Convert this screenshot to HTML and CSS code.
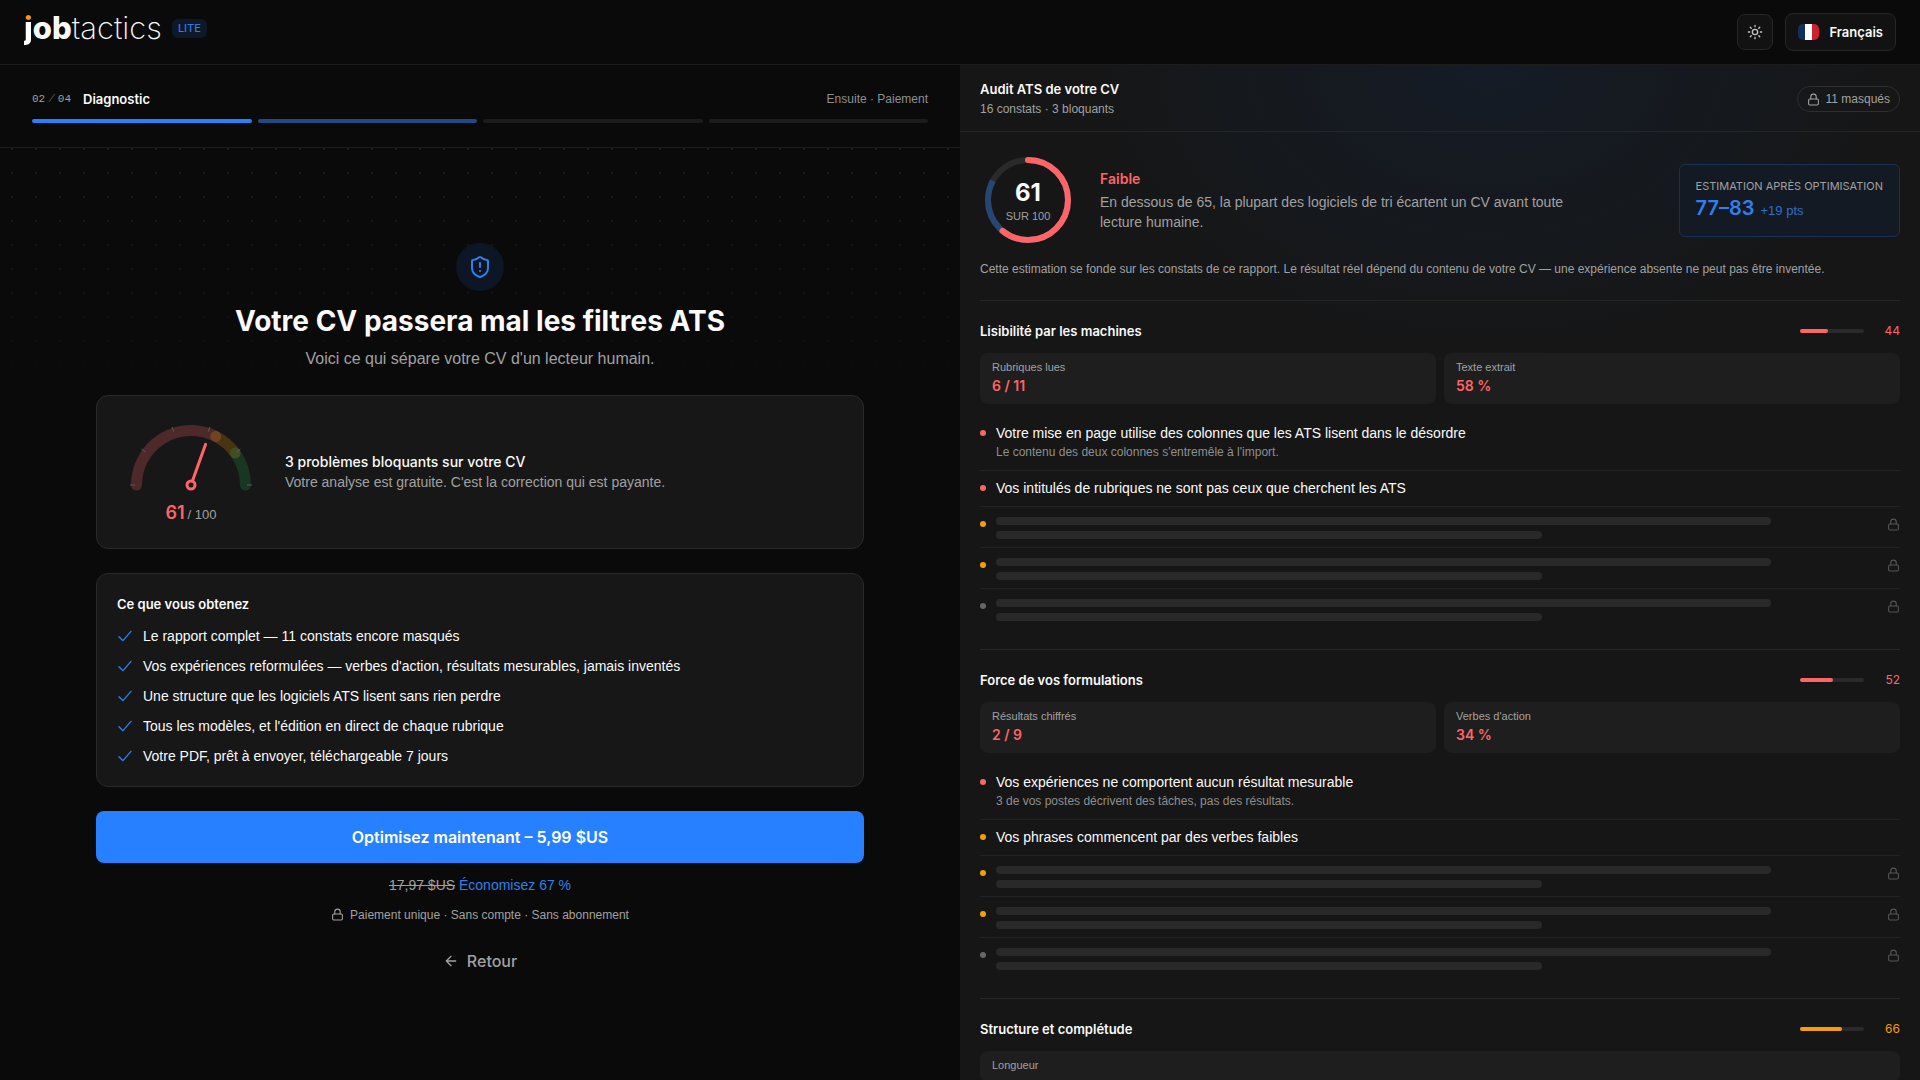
FILE: index.html
```html
<!DOCTYPE html>
<html lang="fr">

<head>
    <meta charset="UTF-8">
    <meta name="viewport" content="width=device-width, initial-scale=1.0">
    <title>JobTactics Lite - Diagnostic</title>
    <link rel="stylesheet" href="styles.css">
</head>

<body>
    <!-- Shared icons -->
    <svg class="sprite" aria-hidden="true">
        <symbol id="lock" viewBox="0 0 24 24">
            <rect x="3" y="11" width="18" height="11" rx="2" />
            <path d="M7 11V7a5 5 0 0 1 10 0v4" />
        </symbol>
        <symbol id="check" viewBox="0 0 24 24">
            <path d="M21 5 9 19l-6-6" />
        </symbol>
    </svg>

    <header class="topbar">
        <a class="brand" href="#">
            <span class="logo"><b><span class="logo-j">j</span>ob</b>tactics</span>
            <span class="badge">LITE</span>
        </a>
        <div class="topbar-actions">
            <button class="theme-btn" type="button" aria-label="Thème">
                <svg class="icon icon-16" viewBox="0 0 24 24">
                    <circle cx="12" cy="12" r="4" />
                    <path d="M12 2v2M12 20v2M4.9 4.9l1.4 1.4M17.7 17.7l1.4 1.4M2 12h2M20 12h2M6.3 17.7l-1.4 1.4M19.1 4.9l-1.4 1.4" />
                </svg>
            </button>
            <button class="lang-btn" type="button">
                <span class="flag"></span>
                Français
            </button>
        </div>
    </header>

    <main class="layout">
        <section class="pane-left">
            <div class="steps">
                <div class="steps-head">
                    <span class="steps-count">02<i>/</i>04</span>
                    <span class="steps-name">Diagnostic</span>
                    <span class="steps-next">Ensuite · Paiement</span>
                </div>
                <div class="steps-bars">
                    <span class="step done"></span>
                    <span class="step current"></span>
                    <span class="step"></span>
                    <span class="step"></span>
                </div>
            </div>

            <div class="offer">
                <div class="offer-inner">
                    <div class="shield">
                        <svg class="icon icon-24" viewBox="0 0 24 24">
                            <path d="M20 13c0 5-3.5 7.500-7.660 8.950a1 1 0 0 1-.67-.01C7.500 20.500 4 18 4 13V6a1 1 0 0 1 1-1c2 0 4.500-1.200 6.240-2.720a1.170 1.170 0 0 1 1.520 0C14.510 3.810 17 5 19 5a1 1 0 0 1 1 1z" />
                            <path d="M12 8v4M12 16h.01" />
                        </svg>
                    </div>
                    <h1>Votre CV passera mal les filtres ATS</h1>
                    <p class="subtitle">Voici ce qui sépare votre CV d'un lecteur humain.</p>

                    <div class="card gauge-card">
                        <div class="gauge">
                            <svg viewBox="0 0 140 80" width="140" height="80">
                                <g class="gauge-arc">
                                    <path class="arc-low" d="M15.500 65A54.500 54.500 0 0 1 94.700 16.400" />
                                    <path class="arc-mid" d="M94.700 16.400A54.500 54.500 0 0 1 114.100 33" />
                                    <path class="arc-high" d="M114.100 33A54.500 54.500 0 0 1 124.500 65" />
                                </g>
                                <path class="gauge-ticks" d="M9 65h5M20.600 29.100l4 3M51.100 7l1.600 4.700M88.900 7l-1.600 4.700M119.400 29.100l-4 3M131 65h-5" />
                                <path class="needle" d="M71.700 60.300 84.600 24.300" />
                                <circle class="hub" cx="70" cy="65" r="4" />
                            </svg>
                            <div class="gauge-value"><strong>61</strong> / 100</div>
                        </div>
                        <div>
                            <p class="card-lead">3 problèmes bloquants sur votre CV</p>
                            <p class="card-text">Votre analyse est gratuite. C'est la correction qui est payante.</p>
                        </div>
                    </div>

                    <div class="card list-card">
                        <h2>Ce que vous obtenez</h2>
                        <ul class="benefits">
                            <li><svg class="icon icon-16"><use href="#check" /></svg>Le rapport complet — 11 constats encore masqués</li>
                            <li><svg class="icon icon-16"><use href="#check" /></svg>Vos expériences reformulées — verbes d'action, résultats mesurables, jamais inventés</li>
                            <li><svg class="icon icon-16"><use href="#check" /></svg>Une structure que les logiciels ATS lisent sans rien perdre</li>
                            <li><svg class="icon icon-16"><use href="#check" /></svg>Tous les modèles, et l'édition en direct de chaque rubrique</li>
                            <li><svg class="icon icon-16"><use href="#check" /></svg>Votre PDF, prêt à envoyer, téléchargeable 7 jours</li>
                        </ul>
                    </div>

                    <button class="cta" type="button">Optimisez maintenant – 5,99 $US</button>
                    <p class="price"><s>17,97 $US</s> <span>Économisez 67 %</span></p>
                    <p class="secure"><svg class="icon icon-13"><use href="#lock" /></svg>Paiement unique · Sans compte · Sans abonnement</p>
                    <button class="back" type="button">
                        <svg class="icon icon-16" viewBox="0 0 24 24"><path d="m12 19-7-7 7-7M19 12H5" /></svg>
                        Retour
                    </button>
                </div>
            </div>
        </section>

        <section class="pane-right">
            <div class="audit-head">
                <div>
                    <h2>Audit ATS de votre CV</h2>
                    <p>16 constats · 3 bloquants</p>
                </div>
                <span class="pill"><svg class="icon icon-13"><use href="#lock" /></svg>11 masqués</span>
            </div>

            <div class="audit-body">
                <div class="summary">
                    <div class="ring">
                        <svg viewBox="0 0 96 96" width="96" height="96">
                            <circle class="ring-track" cx="48" cy="48" r="40" />
                            <circle class="ring-target" cx="48" cy="48" r="40" pathLength="100" />
                            <circle class="ring-score" cx="48" cy="48" r="40" pathLength="100" />
                        </svg>
                        <div class="ring-label"><strong>61</strong><span>SUR 100</span></div>
                    </div>
                    <div class="verdict">
                        <h3>Faible</h3>
                        <p>En dessous de 65, la plupart des logiciels de tri écartent un CV avant toute lecture humaine.</p>
                    </div>
                    <div class="estimate">
                        <p class="estimate-label">ESTIMATION APRÈS OPTIMISATION</p>
                        <p class="estimate-value"><strong>77–83</strong> +19 pts</p>
                    </div>
                </div>
                <p class="note">Cette estimation se fonde sur les constats de ce rapport. Le résultat réel dépend du contenu de votre CV — une expérience absente ne peut pas être inventée.</p>

                <section class="category low">
                    <div class="category-head">
                        <h3>Lisibilité par les machines</h3>
                        <span class="meter"><span style="width: 44%"></span></span>
                        <span class="score">44</span>
                    </div>
                    <div class="stats">
                        <div class="stat"><span>Rubriques lues</span><strong>6 / 11</strong></div>
                        <div class="stat"><span>Texte extrait</span><strong>58 %</strong></div>
                    </div>
                    <ul class="findings">
                        <li>
                            <i class="dot red"></i>
                            <div class="finding">
                                <p>Votre mise en page utilise des colonnes que les ATS lisent dans le désordre</p>
                                <small>Le contenu des deux colonnes s'entremêle à l'import.</small>
                            </div>
                        </li>
                        <li>
                            <i class="dot red"></i>
                            <div class="finding"><p>Vos intitulés de rubriques ne sont pas ceux que cherchent les ATS</p></div>
                        </li>
                        <li><i class="dot amber"></i><div class="masked"><span></span><span></span></div><svg class="icon lock"><use href="#lock" /></svg></li>
                        <li><i class="dot amber"></i><div class="masked"><span></span><span></span></div><svg class="icon lock"><use href="#lock" /></svg></li>
                        <li><i class="dot"></i><div class="masked"><span></span><span></span></div><svg class="icon lock"><use href="#lock" /></svg></li>
                    </ul>
                </section>

                <section class="category low">
                    <div class="category-head">
                        <h3>Force de vos formulations</h3>
                        <span class="meter"><span style="width: 52%"></span></span>
                        <span class="score">52</span>
                    </div>
                    <div class="stats">
                        <div class="stat"><span>Résultats chiffrés</span><strong>2 / 9</strong></div>
                        <div class="stat"><span>Verbes d'action</span><strong>34 %</strong></div>
                    </div>
                    <ul class="findings">
                        <li>
                            <i class="dot red"></i>
                            <div class="finding">
                                <p>Vos expériences ne comportent aucun résultat mesurable</p>
                                <small>3 de vos postes décrivent des tâches, pas des résultats.</small>
                            </div>
                        </li>
                        <li>
                            <i class="dot amber"></i>
                            <div class="finding"><p>Vos phrases commencent par des verbes faibles</p></div>
                        </li>
                        <li><i class="dot amber"></i><div class="masked"><span></span><span></span></div><svg class="icon lock"><use href="#lock" /></svg></li>
                        <li><i class="dot amber"></i><div class="masked"><span></span><span></span></div><svg class="icon lock"><use href="#lock" /></svg></li>
                        <li><i class="dot"></i><div class="masked"><span></span><span></span></div><svg class="icon lock"><use href="#lock" /></svg></li>
                    </ul>
                </section>

                <section class="category medium">
                    <div class="category-head">
                        <h3>Structure et complétude</h3>
                        <span class="meter"><span style="width: 66%"></span></span>
                        <span class="score">66</span>
                    </div>
                    <div class="stats single">
                        <div class="stat"><span>Longueur</span></div>
                    </div>
                </section>
            </div>
        </section>
    </main>
</body>

</html>
```

FILE: styles.css
```css
* {
    box-sizing: border-box;
    margin: 0;
    padding: 0;
}

body {
    height: 100vh;
    display: flex;
    flex-direction: column;
    overflow: hidden;
    background-color: #0a0a0a;
    color: #fafafa;
    font-family: 'Liberation Sans', Arial, sans-serif;
    font-size: 14px;
    line-height: 20px;
}

button {
    font: inherit;
    color: inherit;
    cursor: pointer;
}

ul {
    list-style: none;
}

h1,
h2,
h3,
strong,
button {
    font-family: Inter, sans-serif;
    font-weight: 600;
}

h2,
h3 {
    font-size: 13px;
    line-height: 20px;
}

.sprite {
    position: absolute;
    width: 0;
    height: 0;
}

.icon {
    flex: none;
    fill: none;
    stroke: currentColor;
    stroke-width: 2;
    stroke-linecap: round;
    stroke-linejoin: round;
}

.icon-13 {
    width: 13px;
    height: 13px;
}

.icon-16 {
    width: 16px;
    height: 16px;
}

.icon-24 {
    width: 24px;
    height: 24px;
}

/* Top bar */
.topbar {
    flex: none;
    display: flex;
    align-items: center;
    justify-content: space-between;
    height: 65px;
    padding: 0 24px;
    border-bottom: 1px solid #1c1c1c;
}

.brand {
    display: flex;
    align-items: center;
    gap: 10px;
    padding-bottom: 8px;
    color: inherit;
    text-decoration: none;
}

.logo {
    font-family: Inter, sans-serif;
    font-size: 31px;
    font-weight: 200;
    line-height: 36px;
}

.logo b {
    font-weight: 800;
}

.logo-j {
    background: linear-gradient(#f7931e 36%, #fff 36%);
    background-clip: text;
    -webkit-background-clip: text;
    color: transparent;
}

.badge {
    padding: 2px 6px;
    border-radius: 6px;
    background-color: #0d1828;
    color: #2f7ae5;
    font-family: Inter, sans-serif;
    font-size: 11px;
    font-weight: 500;
    line-height: 15px;
}

.topbar-actions {
    display: flex;
    align-items: center;
    gap: 12px;
}

.theme-btn,
.lang-btn {
    display: flex;
    align-items: center;
    justify-content: center;
    border: 1px solid #262626;
    border-radius: 8px;
    background-color: #121212;
}

.theme-btn {
    width: 36px;
    height: 36px;
    color: #c4c4c4;
}

.lang-btn {
    gap: 10px;
    height: 38px;
    padding: 0 12px;
    font-size: 13px;
}

.flag {
    width: 21px;
    height: 16px;
    border-radius: 5px;
    background: linear-gradient(90deg, #12305e 35%, #fff 35% 68%, #d0202f 68%);
}

/* Layout */
.layout {
    flex: 1;
    min-height: 0;
    display: grid;
    grid-template-columns: 1fr 1fr;
}

.pane-left {
    display: flex;
    flex-direction: column;
    min-height: 0;
}

.steps {
    padding: 24px 32px;
    border-bottom: 1px solid #1c1c1c;
}

.steps-head {
    display: flex;
    align-items: center;
    gap: 12px;
    margin-bottom: 10px;
}

.steps-count {
    color: #a1a1a1;
    font-family: 'Liberation Mono', monospace;
    font-size: 11px;
}

.steps-count i {
    margin: 0 3px;
    color: #555;
}

.steps-name {
    font-family: Inter, sans-serif;
    font-size: 13px;
    font-weight: 600;
}

.steps-next {
    margin-left: auto;
    color: #8f8f8f;
    font-size: 12px;
}

.steps-bars {
    display: flex;
    gap: 6px;
}

.step {
    flex: 1;
    height: 4px;
    border-radius: 2px;
    background-color: #1c1c1c;
}

.step.done {
    background-color: #2680ff;
}

.step.current {
    background-color: #214a85;
}

/* Offer */
.offer {
    flex: 1;
    display: flex;
    align-items: center;
    justify-content: center;
    padding: 0 32px;
    background:
        linear-gradient(rgba(10, 10, 10, 0), #0a0a0a 260px),
        radial-gradient(circle at 12px 1px, #1d1d1d 1px, transparent 1px) 0 0 / 24px 24px;
}

.offer-inner {
    width: 100%;
    max-width: 768px;
    display: flex;
    flex-direction: column;
    align-items: center;
}

.shield {
    display: flex;
    align-items: center;
    justify-content: center;
    width: 48px;
    height: 48px;
    margin-bottom: 12px;
    border-radius: 50%;
    background-color: #0c1624;
    color: #2f80ed;
}

h1 {
    margin-bottom: 8px;
    font-size: 28px;
    font-weight: 700;
    line-height: 36px;
}

.subtitle {
    margin-bottom: 24px;
    color: #a1a1a1;
    font-size: 16px;
    line-height: 24px;
}

.card {
    width: 100%;
    margin-bottom: 24px;
    border: 1px solid #2a2a2a;
    border-radius: 12px;
    background-color: #171717;
}

.gauge-card {
    display: flex;
    align-items: center;
    gap: 24px;
    padding: 24px;
}

.gauge svg {
    display: block;
}

.gauge-arc {
    fill: none;
    stroke-width: 11;
    stroke-linecap: round;
}

.arc-low {
    stroke: rgba(255, 100, 103, 0.24);
}

.arc-mid {
    stroke: rgba(245, 158, 11, 0.22);
}

.arc-high {
    stroke: rgba(34, 197, 94, 0.18);
}

.gauge-ticks {
    fill: none;
    stroke: #5c5c5c;
}

.needle {
    stroke: #ff6467;
    stroke-width: 3;
    stroke-linecap: round;
}

.hub {
    fill: #171717;
    stroke: #ff6467;
    stroke-width: 3;
}

.gauge-value {
    display: flex;
    align-items: baseline;
    justify-content: center;
    gap: 3px;
    margin-top: 4px;
    color: #a1a1a1;
    font-size: 13px;
    line-height: 18px;
}

.gauge-value strong {
    color: #ff6467;
    font-size: 18px;
}

.card-lead {
    font-family: Inter, sans-serif;
    font-weight: 500;
}

.card-text {
    color: #a1a1a1;
}

.list-card {
    padding: 20px;
}

.benefits {
    display: grid;
    gap: 10px;
    margin-top: 12px;
}

.benefits li {
    display: flex;
    align-items: center;
    gap: 10px;
}

.benefits .icon {
    color: #2f80ed;
}

.cta {
    width: 100%;
    height: 52px;
    border: 0;
    border-radius: 8px;
    background-color: #2680ff;
    color: #fff;
    font-size: 16px;
}

.price {
    margin-top: 12px;
    color: #2f80ed;
}

.price s {
    color: #a1a1a1;
}

.secure {
    display: flex;
    align-items: center;
    gap: 6px;
    margin-top: 10px;
    color: #a1a1a1;
    font-size: 12px;
}

.back {
    display: flex;
    align-items: center;
    gap: 8px;
    height: 50px;
    margin-top: 11px;
    padding: 0 16px;
    border: 0;
    background: none;
    color: #a1a1a1;
    font-size: 16px;
    font-weight: 500;
}

/* Audit */
.pane-right {
    display: flex;
    flex-direction: column;
    min-height: 0;
    overflow: hidden;
    background: radial-gradient(ellipse 420px 300px at 55% 0, #151c27, #161616) #161616;
}

.audit-head {
    flex: none;
    display: flex;
    align-items: center;
    justify-content: space-between;
    height: 67px;
    padding: 2px 20px 0;
    border-bottom: 1px solid #262626;
}

.audit-head p {
    color: #a1a1a1;
    font-size: 12px;
}

.pill {
    display: flex;
    align-items: center;
    gap: 6px;
    padding: 2px 9px;
    border: 1px solid #2e2e2e;
    border-radius: 13px;
    color: #a1a1a1;
    font-size: 12px;
}

.audit-body {
    padding: 20px;
}

.summary {
    display: flex;
    align-items: center;
    gap: 24px;
}

.ring {
    flex: none;
    display: grid;
    place-items: center;
}

.ring > * {
    grid-area: 1 / 1;
}

.ring svg {
    transform: rotate(-90deg);
}

.ring circle {
    fill: none;
    stroke-width: 6;
}

.ring-track {
    stroke: #2a2a2a;
}

.ring-target {
    stroke: #274672;
    stroke-dasharray: 83 17;
}

.ring-score {
    stroke: #ff6467;
    stroke-linecap: round;
    stroke-dasharray: 61 39;
}

.ring-label {
    display: flex;
    flex-direction: column;
    align-items: center;
    padding-top: 4px;
    color: #a1a1a1;
    font-size: 11px;
    line-height: 18px;
}

.ring-label strong {
    color: #fafafa;
    font-size: 24px;
    font-weight: 700;
    line-height: 28px;
}

.verdict {
    flex: 1;
    color: #a1a1a1;
}

.verdict h3 {
    margin-bottom: 3px;
    color: #ff6467;
    font-size: 14px;
}

.verdict p {
    max-width: 500px;
}

.estimate {
    padding: 11px 16px 13px;
    border: 1px solid #183054;
    border-radius: 6px;
    background-color: #131a24;
}

.estimate-label {
    color: #a1a1a1;
    font-family: Inter, sans-serif;
    font-size: 11px;
}

.estimate-value {
    display: flex;
    align-items: baseline;
    gap: 6px;
    color: #2f6fcb;
    font-size: 13px;
    line-height: 24px;
}

.estimate-value strong {
    color: #2f80ed;
    font-size: 20px;
}

.note {
    margin-top: 11px;
    padding-bottom: 21px;
    color: #a1a1a1;
    font-size: 12px;
}

.category {
    padding: 20px 0;
    border-top: 1px solid #262626;
}

.category-head {
    display: flex;
    align-items: center;
}

.meter {
    width: 64px;
    height: 4px;
    margin-left: auto;
    border-radius: 2px;
    background-color: #2a2a2a;
}

.meter span {
    display: block;
    height: 100%;
    border-radius: 2px;
}

.score {
    width: 36px;
    font-family: Inter, sans-serif;
    font-size: 12px;
    text-align: right;
}

.low .score,
.low .stat strong {
    color: #ff6467;
}

.low .meter span {
    background-color: #ff6467;
}

.medium .score {
    color: #f59e0b;
}

.medium .meter span {
    background-color: #f59e0b;
}

.stats {
    display: grid;
    grid-template-columns: 1fr 1fr;
    gap: 8px;
    margin: 12px 0;
}

.stats.single {
    grid-template-columns: 1fr;
}

.stat {
    display: flex;
    flex-direction: column;
    padding: 5px 12px 8px;
    border-radius: 8px;
    background-color: #1e1e1e;
}

.stat span {
    color: #a1a1a1;
    font-size: 11px;
    line-height: 18px;
}

.findings li {
    display: flex;
    gap: 10px;
    padding: 8px 0;
    border-bottom: 1px solid #222;
}

.findings li:last-child {
    border-bottom: 0;
}

.finding {
    line-height: 19px;
}

.finding small {
    display: block;
    color: #8f8f8f;
    font-size: 12px;
}

.dot {
    flex: none;
    width: 6px;
    height: 6px;
    margin-top: 6px;
    border-radius: 50%;
    background-color: #666;
}

.dot.red {
    background-color: #ff6467;
}

.dot.amber {
    background-color: #f59e0b;
}

.masked {
    flex: 1;
    display: flex;
    flex-direction: column;
    gap: 6px;
    padding: 2px 0 0;
}

.masked span {
    width: 88%;
    height: 8px;
    border-radius: 4px;
    background-color: #292929;
}

.masked span:last-child {
    width: 62%;
}

.lock {
    width: 13px;
    height: 13px;
    margin-top: 3px;
    color: #555;
}
```
